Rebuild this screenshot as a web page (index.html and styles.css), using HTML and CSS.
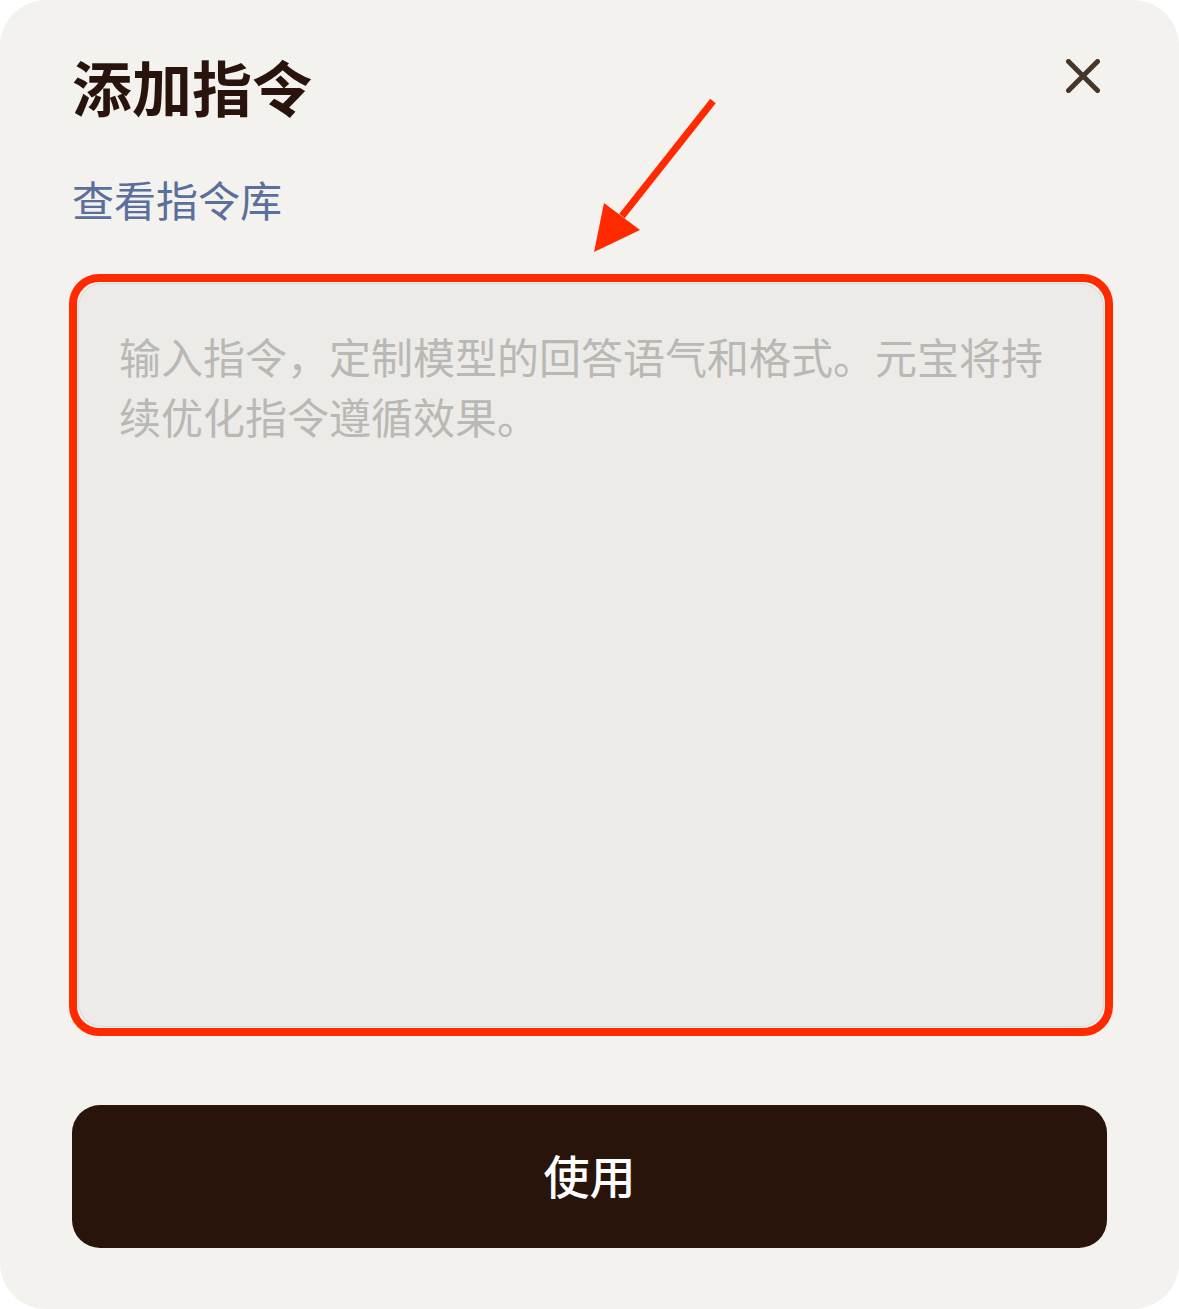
FILE: index.html
```html
<!DOCTYPE html>
<html lang="zh-CN">
<head>
  <meta charset="UTF-8" />
  <meta name="viewport" content="width=device-width, initial-scale=1.0"/>
  <title>添加指令</title>
  <link rel="stylesheet" href="styles.css">
</head>
<body>
  <div class="card">
    <div class="header">
      <h1>添加指令</h1>
      <button class="close" aria-label="关闭">
        <svg width="34" height="34" viewBox="0 0 34 34">
          <path d="M2.5 2.5 L31.5 31.5 M31.5 2.5 L2.5 31.5" stroke="#463529" stroke-width="5" stroke-linecap="round" fill="none"/>
        </svg>
      </button>
    </div>

    <a class="library-link" href="#">查看指令库</a>

    <!-- highlighted input area -->
    <div class="highlight">
      <textarea class="prompt" placeholder="输入指令，定制模型的回答语气和格式。元宝将持续优化指令遵循效果。"></textarea>
    </div>

    <button class="use-btn">使用</button>

    <svg class="arrow" width="140" height="170" viewBox="580 90 140 170">
      <line x1="713" y1="101" x2="622" y2="216" stroke="#ff2a00" stroke-width="7"/>
      <polygon points="604,203 640,230 594,252" fill="#ff2a00"/>
    </svg>
  </div>
</body>
</html>
```

FILE: styles.css
```css
* {
  box-sizing: border-box;
}

body {
  margin: 0;
  padding: 0;
  background: #fff;
  font-family: "Noto Sans CJK SC", "Noto Sans", sans-serif;
}

.card {
  position: relative;
  width: 1179px;
  height: 1309px;
  background: #f3f2ee;
  border-radius: 46px;
  padding: 56px 72px 0 72px;
  display: flex;
  flex-direction: column;
  overflow: hidden;
}

.header {
  display: flex;
  justify-content: space-between;
  align-items: flex-start;
}

h1 {
  margin: 0;
  font-size: 60px;
  line-height: 60px;
  font-weight: 700;
  color: #28140c;
}

.close {
  background: none;
  border: none;
  padding: 0;
  margin: 3px 7px 0 0;
  width: 34px;
  height: 34px;
  cursor: pointer;
}

.close svg {
  display: block;
}

.library-link {
  margin-top: 58px;
  font-size: 42px;
  line-height: 50px;
  color: #5a6f9b;
  text-decoration: none;
  align-self: flex-start;
}

.highlight {
  margin: 50px -6px 0 -3px;
  height: 762px;
  border: 8px solid #ff2a00;
  border-radius: 30px;
  padding: 1px;
}

.prompt {
  display: block;
  width: 100%;
  height: 100%;
  resize: none;
  background: #ecebe7;
  border: 1px solid #d9d8d4;
  border-radius: 24px;
  padding: 42px 40px;
  font-family: inherit;
  font-size: 42px;
  line-height: 60px;
  color: #28140c;
  outline: none;
}

.prompt::placeholder {
  color: #b9b8b5;
}

.use-btn {
  margin-top: 69px;
  height: 143px;
  width: 100%;
  border: none;
  border-radius: 28px;
  background: #28140b;
  color: #fff;
  font-family: inherit;
  font-size: 46px;
  font-weight: 500;
  padding-bottom: 6px;
  cursor: pointer;
}

.arrow {
  position: absolute;
  left: 580px;
  top: 90px;
}
```
